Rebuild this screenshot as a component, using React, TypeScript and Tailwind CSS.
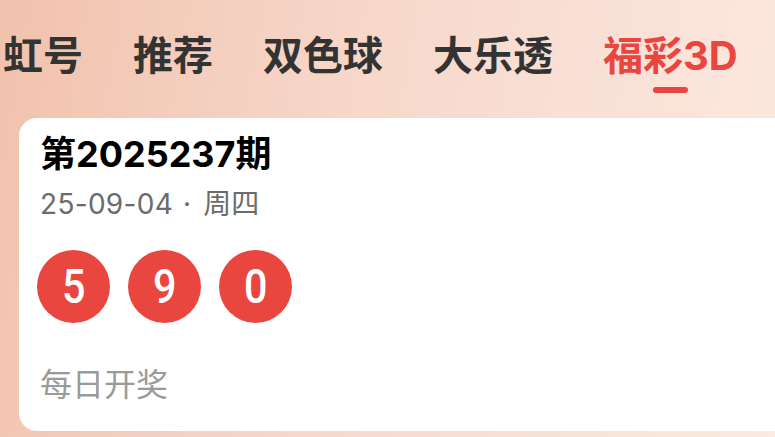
import React from 'react';

const tabs = [
  { name: '虹号', active: false },
  { name: '推荐', active: false },
  { name: '双色球', active: false },
  { name: '大乐透', active: false },
  { name: '福彩3D', active: true },
];

const balls = ['5', '9', '0'];

const font = { fontFamily: 'Inter, "Noto Sans CJK SC", sans-serif' };
const ballFont = { fontFamily: 'Roboto, Inter, sans-serif' };

export default function App() {
  return (
    <div
      className="relative h-[437px] w-[775px] overflow-hidden bg-[linear-gradient(100deg,#f1c2ad_0%,#f7d8cb_45%,#fce9e1_100%)]"
      style={font}
    >
      {/* tab bar */}
      <div className="flex h-[118px] items-start gap-[50px] whitespace-nowrap pl-[3px] pt-[30px]">
        {tabs.map(t => (
          <div key={t.name} className="flex flex-col items-center">
            <span
              className={
                'text-[40px] font-bold leading-[52px] ' +
                (t.active ? 'text-[#e8463e]' : 'text-[#333333]')
              }
            >
              {t.name}
            </span>
            {t.active ? (
              <span className="mt-[5px] h-[6px] w-[35px] rounded-full bg-[#e8463e]" />
            ) : (
              <span className="mt-[5px] h-[6px]" />
            )}
          </div>
        ))}
      </div>

      {/* draw card */}
      <div className="ml-[19px] h-[313px] w-[800px] rounded-[18px] bg-white pl-[21px] pt-[14px]">
        <div className="text-[36px] font-bold leading-[44px] text-black">第2025237期</div>
        <div className="mt-[10px] flex items-center text-[28px] leading-[36px] text-[#6b6b6b]">
          <span className="tracking-[0.3px]">25-09-04</span>
          <span className="ml-[10px]">·</span>
          <span className="ml-[12px]">周四</span>
        </div>
        <div className="-ml-[3px] mt-[28px] flex gap-[18px]">
          {balls.map((b, i) => (
            <div
              key={i}
              className="flex h-[73px] w-[73px] items-center justify-center rounded-full bg-[#e8463e] text-white"
            >
              <span className="scale-x-[0.86] text-[48px] font-medium leading-none" style={ballFont}>
                {b}
              </span>
            </div>
          ))}
        </div>
        <div className="mt-[42px] text-[32px] leading-[40px] text-[#9a9a9a]">每日开奖</div>
      </div>
    </div>
  );
}
